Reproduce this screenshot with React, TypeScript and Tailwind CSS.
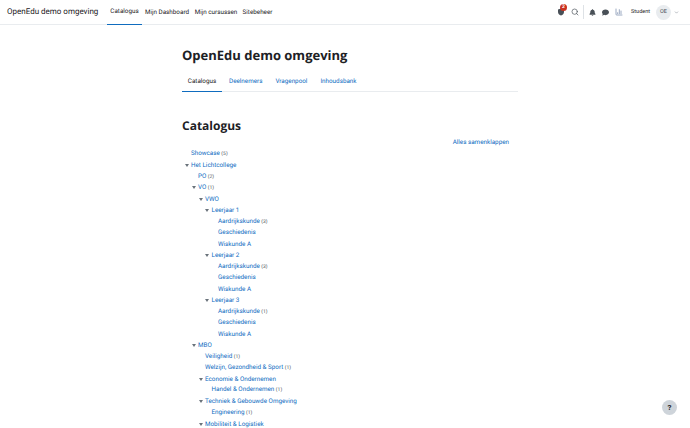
import React from "react";
import { FaBell, FaComment } from "react-icons/fa";
import { Search, ChartColumn, ChevronDown } from "lucide-react";

const indent = ["pl-[9px]", "pl-[16px]", "pl-[23px]", "pl-[29.5px]", "pl-[36px]"];

type Row = { label: string; count?: number; level: number; open?: boolean };

const rows: Row[] = [
  { label: "Showcase", count: 5, level: 0 },
  { label: "Het Lichtcollege", level: 0, open: true },
  { label: "PO", count: 2, level: 1 },
  { label: "VO", count: 1, level: 1, open: true },
  { label: "VWO", level: 2, open: true },
  { label: "Leerjaar 1", level: 3, open: true },
  { label: "Aardrijkskunde", count: 3, level: 4 },
  { label: "Geschiedenis", level: 4 },
  { label: "Wiskunde A", level: 4 },
  { label: "Leerjaar 2", level: 3, open: true },
  { label: "Aardrijkskunde", count: 3, level: 4 },
  { label: "Geschiedenis", level: 4 },
  { label: "Wiskunde A", level: 4 },
  { label: "Leerjaar 3", level: 3, open: true },
  { label: "Aardrijkskunde", count: 1, level: 4 },
  { label: "Geschiedenis", level: 4 },
  { label: "Wiskunde A", level: 4 },
  { label: "MBO", level: 1, open: true },
  { label: "Veiligheid", count: 1, level: 2 },
  { label: "Welzijn, Gezondheid & Sport", count: 1, level: 2 },
  { label: "Economie & Ondernemen", level: 2, open: true },
  { label: "Handel & Ondernemen", count: 1, level: 3 },
  { label: "Techniek & Gebouwde Omgeving", level: 2, open: true },
  { label: "Engineering", count: 1, level: 3 },
  { label: "Mobiliteit & Logistiek", level: 2, open: true },
];

function Shield() {
  return (
    <svg viewBox="0 0 16 16" className="w-[8px] h-[8px] fill-[#495057]">
      <path d="M8 1 14 3v5c0 3.500-2.600 6-6 7-3.400-1-6-3.500-6-7V3z" />
    </svg>
  );
}

function CategoryRow({ row }: { row: Row }) {
  return (
    <div className={`h-[11.25px] flex items-center relative ${indent[row.level]}`}>
      {row.open && (
        <span className="absolute -ml-[6.500px] w-0 h-0 border-x-[2.500px] border-x-transparent border-t-[3px] border-t-[#6a737b]" />
      )}
      <span className="leading-[11px]">
        <a className="text-[#0f6cbf]">{row.label}</a>
        {row.count !== undefined && <span className="ml-[1.500px] text-[5px] text-[#495057]">({row.count})</span>}
      </span>
    </div>
  );
}

export default function App() {
  return (
    <div className="w-[690px] h-[428px] overflow-hidden relative bg-white whitespace-nowrap [text-rendering:geometricPrecision] text-[6.300px] text-[#1d2125] font-['Roboto',sans-serif]">
      <nav className="h-[25px] border-b border-[#e9ecef] flex items-stretch pl-[7px] pr-[11px]">
        <div className="self-center w-[91px] text-[8px] mr-[9px]">OpenEdu demo omgeving</div>
        <div className="flex -mb-px text-[#1d2125]">
          <a className="w-[35px] flex items-center justify-center border-b-[1.500px] border-[#0f6cbf]">Catalogus</a>
          <a className="w-[44px] ml-[3px] flex items-center justify-center">Mijn Dashboard</a>
          <a className="w-[40px] ml-[7px] flex items-center justify-center">Mijn cursussen</a>
          <a className="w-[29px] ml-[7px] flex items-center justify-center">Sitebeheer</a>
        </div>
        <div className="ml-auto flex items-center text-[#495057]">
          <span className="relative mr-[6px]">
            <Shield />
            <span className="absolute -top-[4px] left-[3px] w-[7px] h-[7px] rounded-full bg-[#ca3120] text-white text-[5px] font-bold flex items-center justify-center">2</span>
          </span>
          <Search className="w-[8px] h-[8px] mr-[4px]" strokeWidth={2} />
          <span className="w-px h-[14px] bg-[#dee2e6] mr-[5px]" />
          <FaBell className="w-[7px] h-[7px] mr-[6px]" />
          <FaComment className="w-[7px] h-[7px] mr-[6px]" />
          <ChartColumn className="w-[8px] h-[8px] mr-[8px] text-[#6a7fa3]" strokeWidth={2} />
          <span className="text-[5.500px] text-[#1d2125] mr-[6px]">Student</span>
          <span className="w-[15px] h-[15px] rounded-full bg-[#e9ecef] flex items-center justify-center text-[5.500px] mr-[3px]">OE</span>
          <ChevronDown className="w-[5px] h-[5px] text-[#8f959e]" strokeWidth={3} />
        </div>
      </nav>

      <main className="ml-[182px] w-[336px]">
        <h1 className="mt-[22px] text-[13px] leading-[16px] font-bold font-['Open_Sans',sans-serif]">OpenEdu demo omgeving</h1>
        <div className="mt-[9px] h-[20px] flex border-b border-[#e9ecef] text-[#0f6cbf]">
          <a className="w-[40px] flex items-center justify-center text-[#1d2125] border-b-[1.500px] border-[#0f6cbf] -mb-px">Catalogus</a>
          <a className="ml-[7px] flex items-center">Deelnemers</a>
          <a className="ml-[13px] flex items-center">Vragenpool</a>
          <a className="ml-[13px] flex items-center">Inhoudsbank</a>
        </div>
        <h2 className="mt-[26px] text-[12px] leading-[16px] font-bold font-['Open_Sans',sans-serif]">Catalogus</h2>
        <div className="mt-[4px] pr-[9px] text-right h-[9px] leading-[9px]">
          <a className="text-[#0f6cbf]">Alles samenklappen</a>
        </div>
        <div className="mt-[1.500px]">
          {rows.map((row, i) => (
            <CategoryRow key={i} row={row} />
          ))}
        </div>
      </main>

      <button className="absolute left-[662px] top-[400px] w-[15px] h-[15px] rounded-full bg-[#ced4da] text-[#1d2125] text-[8px] font-bold flex items-center justify-center">?</button>
    </div>
  );
}
